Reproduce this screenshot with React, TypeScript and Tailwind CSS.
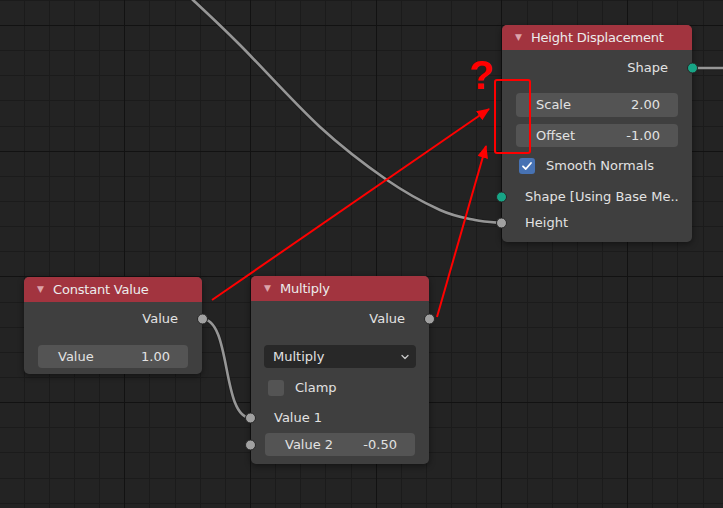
import type { ReactNode } from "react";

const FONT = "font-['DejaVu_Sans',sans-serif]";

type Pt = [number, number];

// grid of the node editor
function Grid() {
  const xs: { v: number; major: boolean }[] = [];
  const ys: { v: number; major: boolean }[] = [];
  for (let k = -5; k <= 25; k++) xs.push({ v: Math.round(124.3 + 25.14 * k), major: k % 5 === 0 });
  for (let k = -1; k <= 20; k++) ys.push({ v: Math.round(25 + 25.14 * k), major: k % 5 === 0 });
  return (
    <svg className="absolute inset-0" width={723} height={508} shapeRendering="crispEdges">
      {xs.filter((l) => !l.major).map((l) => (
        <rect key={"x" + l.v} x={l.v} y={0} width={1} height={508} fill="#1b1b1b" />
      ))}
      {ys.filter((l) => !l.major).map((l) => (
        <rect key={"y" + l.v} x={0} y={l.v} width={723} height={1} fill="#1b1b1b" />
      ))}
      {xs.filter((l) => l.major).map((l) => (
        <rect key={"X" + l.v} x={l.v} y={0} width={1} height={508} fill="#121212" />
      ))}
      {ys.filter((l) => l.major).map((l) => (
        <rect key={"Y" + l.v} x={0} y={l.v} width={723} height={1} fill="#121212" />
      ))}
    </svg>
  );
}

// smooth path through points (catmull-rom -> bezier)
function smooth(pts: Pt[]) {
  let d = `M ${pts[0][0]} ${pts[0][1]}`;
  for (let i = 0; i < pts.length - 1; i++) {
    const p0 = pts[Math.max(0, i - 1)];
    const p1 = pts[i];
    const p2 = pts[i + 1];
    const p3 = pts[Math.min(pts.length - 1, i + 2)];
    const c1: Pt = [p1[0] + (p2[0] - p0[0]) / 6, p1[1] + (p2[1] - p0[1]) / 6];
    const c2: Pt = [p2[0] - (p3[0] - p1[0]) / 6, p2[1] - (p3[1] - p1[1]) / 6];
    d += ` C ${c1[0]} ${c1[1]}, ${c2[0]} ${c2[1]}, ${p2[0]} ${p2[1]}`;
  }
  return d;
}

function Wire({ d }: { d: string }) {
  return (
    <>
      <path d={d} fill="none" stroke="#1a1a1a" strokeWidth={4.5} strokeOpacity={0.6} />
      <path d={d} fill="none" stroke="#969696" strokeWidth={2.6} />
    </>
  );
}

function Wires() {
  const top = smooth([
    [170, -20],
    [193, 0],
    [240, 45],
    [320, 127],
    [387, 180],
    [440, 210],
    [475, 220],
    [502, 223],
  ]);
  return (
    <svg className="absolute inset-0" width={723} height={508}>
      <Wire d={top} />
      <Wire d="M 202 319 C 232 319, 221 418, 251 418" />
      <Wire d="M 692 68 L 730 68" />
    </svg>
  );
}

function Annotations() {
  return (
    <svg className="absolute inset-0" width={723} height={508}>
      <defs>
        <marker id="head" viewBox="0 0 12 10" refX="11" refY="5" markerWidth="6.5" markerHeight="5.5" orient="auto" markerUnits="strokeWidth">
          <path d="M 0 0 L 12 5 L 0 10 z" fill="#ff0000" />
        </marker>
      </defs>
      <line x1={212} y1={300} x2={489} y2={109} stroke="#ff0000" strokeWidth={2} markerEnd="url(#head)" />
      <line x1={437} y1={317} x2={486} y2={146} stroke="#ff0000" strokeWidth={2} markerEnd="url(#head)" />
    </svg>
  );
}

function Socket({ side, color = "#a1a1a1" }: { side: "left" | "right"; color?: string }) {
  return (
    <span
      className={`absolute top-1/2 -translate-y-1/2 w-[11px] h-[11px] rounded-full border border-[#262626] ${
        side === "left" ? "-left-[6px]" : "-right-[6px]"
      }`}
      style={{ backgroundColor: color }}
    />
  );
}

function Node({
  left,
  top,
  width,
  title,
  children,
}: {
  left: number;
  top: number;
  width: number;
  title: string;
  children: ReactNode;
}) {
  return (
    <div
      className="absolute rounded-[5px] bg-[#3f3f3f] shadow-[0_2px_6px_rgba(0,0,0,0.45)]"
      style={{ left, top, width }}
    >
      <div className="h-[25px] flex items-center rounded-t-[5px] bg-[#a2343f] pl-[13px] text-[13px] text-[#ececec]">
        <span className="text-[9px] text-[#dca3aa] w-[16px]">▼</span>
        <span className="tracking-[-0.2px]">{title}</span>
      </div>
      {children}
    </div>
  );
}

function OutRow({ label, color, className = "" }: { label: string; color?: string; className?: string }) {
  return (
    <div className={`relative h-[22px] flex items-center justify-end pr-[24px] text-[13px] text-[#e2e2e2] ${className}`}>
      {label}
      <Socket side="right" color={color} />
    </div>
  );
}

function InRow({ label, color, className = "" }: { label: string; color?: string; className?: string }) {
  return (
    <div className={`relative h-[22px] flex items-center pl-[23px] text-[13px] text-[#e2e2e2] ${className}`}>
      {label}
      <Socket side="left" color={color} />
    </div>
  );
}

function Field({ label, value, className = "" }: { label: string; value: string; className?: string }) {
  return (
    <div className={`mx-[14px] h-[23px] rounded-[4px] bg-[#545454] flex items-center justify-between pl-[20px] pr-[18px] text-[13px] text-[#e2e2e2] ${className}`}>
      <span>{label}</span>
      <span>{value}</span>
    </div>
  );
}

function Check({ label, checked, className = "" }: { label: string; checked?: boolean; className?: string }) {
  return (
    <div className={`h-[22px] flex items-center pl-[17px] gap-[11px] text-[13px] text-[#e2e2e2] ${className}`}>
      <span
        className={`w-[16px] h-[16px] rounded-[3px] flex items-center justify-center ${
          checked ? "bg-[#4772b3]" : "bg-[#545454]"
        }`}
      >
        {checked && (
          <svg width="12" height="12" viewBox="0 0 12 12">
            <path d="M2 6.3 L4.8 9 L10 3" fill="none" stroke="#ffffff" strokeWidth="1.8" strokeLinecap="round" strokeLinejoin="round" />
          </svg>
        )}
      </span>
      {label}
    </div>
  );
}

export default function App() {
  return (
    <div className={`relative w-[723px] h-[508px] overflow-hidden bg-[#232323] ${FONT}`}>
      <Grid />
      <Wires />

      <Node left={502} top={25} width={190} title="Height Displacement">
        <div className="flex flex-col pt-[7px] pb-[8px]">
          <OutRow label="Shape" color="#17a586" />
          <Field label="Scale" value="2.00" className="mt-[14px] h-[24px]" />
          <Field label="Offset" value="-1.00" className="mt-[7px]" />
          <Check label="Smooth Normals" checked className="mt-[8px]" />
          <InRow label="Shape [Using Base Me.." color="#17a586" className="mt-[9px]" />
          <InRow label="Height" className="mt-[4px]" />
        </div>
      </Node>

      <Node left={24} top={277} width={178} title="Constant Value">
        <div className="flex flex-col pt-[6px] pb-[6px]">
          <OutRow label="Value" />
          <Field label="Value" value="1.00" className="mt-[15px] pl-[19px]" />
        </div>
      </Node>

      <Node left={251} top={276} width={178} title="Multiply">
        <div className="flex flex-col pt-[7px] pb-[8px]">
          <OutRow label="Value" />
          <div className="mt-[15px] mx-[13px] h-[23px] rounded-[4px] bg-[#282828] flex items-center justify-between pl-[9px] pr-[6px] text-[13px] text-[#e2e2e2]">
            <span>Multiply</span>
            <svg width="10" height="10" viewBox="0 0 10 10">
              <path d="M2 3.5 L5 6.5 L8 3.5" fill="none" stroke="#c8c8c8" strokeWidth="1.3" strokeLinecap="round" strokeLinejoin="round" />
            </svg>
          </div>
          <Check label="Clamp" className="mt-[9px]" />
          <InRow label="Value 1" className="mt-[8px]" />
          <div className="relative mt-[4px]">
            <Field label="Value 2" value="-0.50" className="mx-[13px] pl-[19px] pr-[17px]" />
            <Socket side="left" />
          </div>
        </div>
      </Node>

      <Annotations />
      <div className="absolute left-[494px] top-[79px] w-[37px] h-[75px] rounded-[3px] border-2 border-[#ff0000]" />
      <div className="absolute left-[469px] top-[50px] text-[41px] leading-[50px] font-bold text-[#ff0000] font-['Liberation_Sans',sans-serif]">
        ?
      </div>
    </div>
  );
}
